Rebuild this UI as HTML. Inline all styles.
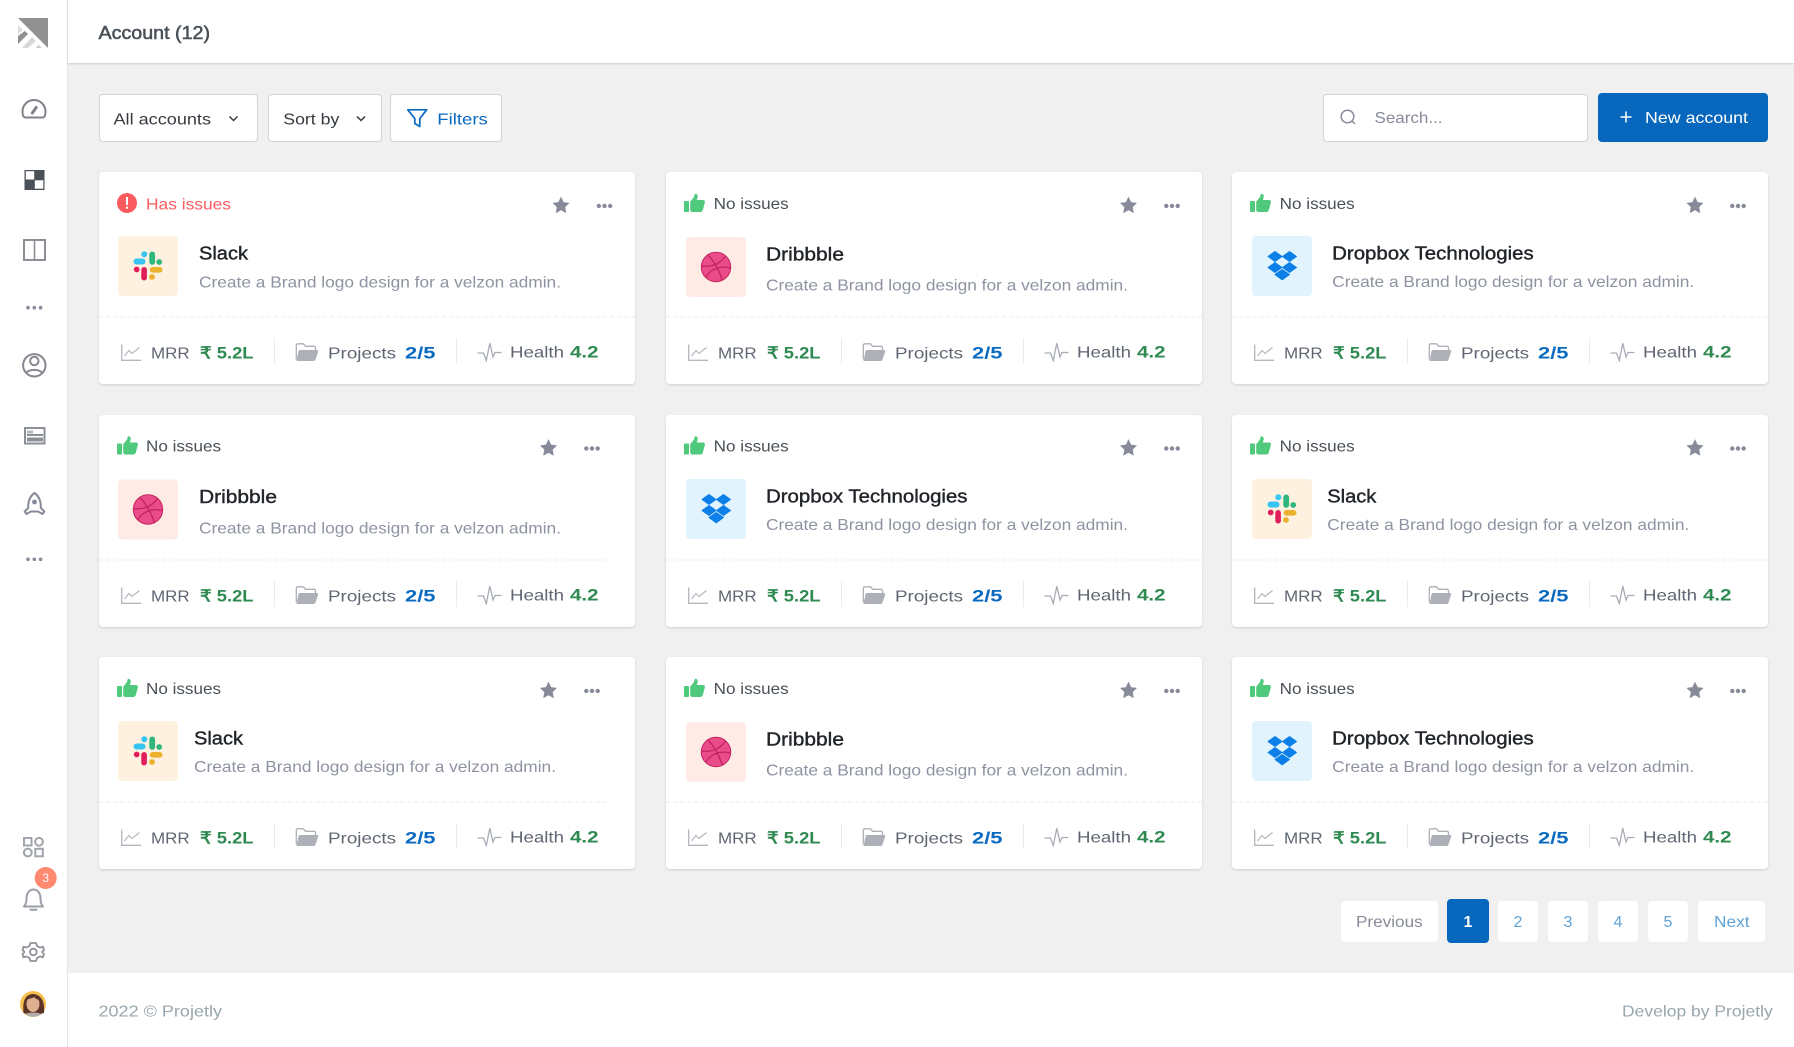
<!DOCTYPE html>
<html lang="en"><head><meta charset="utf-8"><title>Account</title>
<style>
*{box-sizing:border-box}
html,body{margin:0;width:1794px;height:1047px;overflow:hidden;background:#f0f0f0;font-family:"Liberation Sans",sans-serif}
.side{position:absolute;left:0;top:0;width:68px;height:1047px;background:#fff;border-right:1px solid #e6e6e6}
.head{position:absolute;left:68px;top:0;width:1726px;height:63px;background:#fff;box-shadow:0 1px 2px rgba(56,65,74,.2)}
.foot{position:absolute;left:68px;top:973px;width:1726px;height:74px;background:#fff}
.btn{position:absolute;background:#fff;border:1px solid #ced4da;border-radius:4px}
.pg{position:absolute;top:901px;height:41px;background:#fff;border-radius:4px}
.card{position:absolute;width:536px;height:212px;background:#fff;border-radius:4px;box-shadow:0 1px 2px rgba(56,65,74,.18)}
.card svg{position:absolute;left:0;top:0}
svg text{font-family:"Liberation Sans",sans-serif;font-size:16px;white-space:pre}
.s{fill:#495057}.r{fill:#fb5b5f}
.ti{fill:#212529;font-size:18.3px;stroke:#212529;stroke-width:.4px}
.de{fill:#8d93a1}
.l{fill:#5f6672}
.v{font-weight:700;font-size:16.5px}
.g{fill:#2f8a52}.b{fill:#0a6ac0}
</style></head><body>
<svg width="0" height="0" style="position:absolute"><defs>
<symbol id="up" viewBox="0 0 21 19"><rect x="0" y="7.5" width="5" height="11" rx="1" fill="#4fc97b"/><path d="M6.2 8.2 10 3.5 10.8.4c2.4-.5 3.4 1.4 2.8 3.4L12.800 6.500H19c1.500 0 2.200 1.300 1.800 2.600L18.800 16.500c-.4 1.200-1.300 2-2.600 2H8.500c-1.300 0-2.300-.8-2.300-2Z" fill="#4fc97b"/></symbol>
<symbol id="star" viewBox="0 0 18 18"><path d="M9 .6 11.600 6.200 17.600 7 13.200 11.200 14.300 17.300 9 14.300 3.700 17.300 4.800 11.200.4 7 6.400 6.200Z" fill="#878a99" stroke="#878a99" stroke-width=".5" stroke-linejoin="round"/></symbol>
<symbol id="more" viewBox="0 0 16 5"><circle cx="2.300" cy="2.500" r="2.200" fill="#878a99"/><circle cx="8" cy="2.500" r="2.200" fill="#878a99"/><circle cx="13.700" cy="2.500" r="2.200" fill="#878a99"/></symbol>
<symbol id="slack" viewBox="0 0 60 60"><circle cx="26.300" cy="18.300" r="3" fill="#36c5f0"/><rect x="15.500" y="22.500" width="12" height="6" rx="3" fill="#36c5f0"/><rect x="31.300" y="15.500" width="5.800" height="13.300" rx="2.900" fill="#2eb67d"/><circle cx="41.200" cy="26" r="2.900" fill="#2eb67d"/><circle cx="18.700" cy="33.500" r="2.900" fill="#e01e5a"/><rect x="23.300" y="31" width="5.600" height="13.500" rx="2.800" fill="#e01e5a"/><rect x="31.700" y="31" width="12.800" height="5.600" rx="2.800" fill="#ecb22e"/><circle cx="34" cy="41" r="2.900" fill="#ecb22e"/></symbol>
<symbol id="drop" viewBox="0 0 60 60"><g fill="#0d7fe8" stroke="#0d7fe8" stroke-width="1" stroke-linejoin="round"><path d="M23 15.500 30 20.500 23 25.500 16 20.500Z"/><path d="M37.500 15.500 44.500 20.500 37.500 25.500 30.500 20.500Z"/><path d="M23 26.500 30 31.500 23 36.500 16 31.500Z"/><path d="M37.500 26.500 44.500 31.500 37.500 36.500 30.500 31.500Z"/><path d="M30.200 33.500 37.500 38.500 30.200 43.800 23 38.500Z"/></g></symbol>
<symbol id="drib" viewBox="0 0 60 60"><circle cx="30" cy="30" r="14.700" fill="#ea4c89" stroke="#c32361" stroke-width="1"/><g fill="none" stroke="#c32361" stroke-width="1.300"><path d="M22 18C28 24 33 33 36.500 43.500"/><path d="M16 29C24 30 33 28 39.500 19"/><path d="M20 40C24 33 33 28 44.500 31"/></g></symbol>
<symbol id="ch" viewBox="0 0 20 17"><path d="M.7.5V16.300H20" fill="none" stroke="#b3b7be" stroke-width="1.300"/><path d="M3.500 12 8 6.500 11 9.500 18.500 3.500" fill="none" stroke="#b3b7be" stroke-width="1.200"/></symbol>
<symbol id="fo" viewBox="0 0 23 18"><path d="M.8 16.500V2.300A1.500 1.500 0 0 1 2.300.8H8L10 3.300H18.500A1.500 1.500 0 0 1 20 4.800V7.500" fill="none" stroke="#adb0b7" stroke-width="1.300"/><path d="M4.500 7H21.500C22.500 7 23 7.600 22.700 8.500L20 16.500C19.700 17.500 19 18 18 18H1L3 8.300C3.200 7.400 3.700 7 4.500 7Z" fill="#adb0b7"/></symbol>
<symbol id="pu" viewBox="0 0 24 20"><path d="M0 11H6L8.800 18.500 12.300 1.200 15.500 15 17.500 10.500H24" fill="none" stroke="#a8adb5" stroke-width="1.300"/></symbol>
</defs></svg>

<div class="side"></div>
<div class="head"></div>
<div class="foot"></div>
<div class="btn" style="left:98.500px;top:94px;width:159.500px;height:48px"></div>
<div class="btn" style="left:268px;top:94px;width:113.500px;height:48px"></div>
<div class="btn" style="left:389.500px;top:94px;width:112.500px;height:48px"></div>
<div class="btn" style="left:1323px;top:93.500px;width:265px;height:48.500px"></div>
<div class="btn" style="left:1598px;top:93px;width:170px;height:49px;background:#0667bd;border:0"></div>

<div class="card" style="left:98.500px;top:172px"><svg width="536" height="212">
<circle cx="28" cy="31" r="10" fill="#fb5b5f"/><rect x="27" y="25" width="2" height="8" fill="#fff"/><rect x="27" y="34.500" width="2" height="2.200" fill="#fff"/>
<text class="r" x="47" y="37.500" textLength="85" lengthAdjust="spacingAndGlyphs">Has issues</text>
<use href="#star" x="453.500" y="24.500" width="17" height="17"/><use href="#more" x="497.500" y="31.500" width="16" height="5"/>
<rect x="19" y="64" width="60" height="60" rx="4" fill="#fff1e0"/><use href="#slack" x="19" y="64" width="60" height="60"/>
<text class="ti" x="100" y="87.500" textLength="49" lengthAdjust="spacingAndGlyphs">Slack</text>
<text class="de" x="100" y="115.500" textLength="362" lengthAdjust="spacingAndGlyphs">Create a Brand logo design for a velzon admin.</text>
<line x1="0" x2="536" y1="145" y2="145" stroke="#e9ebec" stroke-dasharray="4 3"/>
<use href="#ch" x="22" y="172" width="20" height="17"/><text class="l" x="52" y="186.500" textLength="38.700" lengthAdjust="spacingAndGlyphs">MRR</text><text class="v g" x="101" y="186.500" textLength="53.500" lengthAdjust="spacingAndGlyphs">₹ 5.2L</text><rect x="175" y="166" width="1" height="26" fill="#e9ebec"/><use href="#fo" x="196.500" y="171" width="23" height="18"/><text class="l" x="229" y="186.500" textLength="68" lengthAdjust="spacingAndGlyphs">Projects</text><text class="v b" x="306" y="186.500" textLength="30.500" lengthAdjust="spacingAndGlyphs">2/5</text><rect x="357" y="166" width="1" height="26" fill="#e9ebec"/><use href="#pu" x="378.500" y="170" width="24" height="20"/><text class="l" x="411" y="185.500" textLength="54" lengthAdjust="spacingAndGlyphs">Health</text><text class="v g" x="471" y="185.500" textLength="28.500" lengthAdjust="spacingAndGlyphs">4.2</text>
</svg></div>

<div class="card" style="left:666px;top:172px"><svg width="536" height="212">
<use href="#up" x="18" y="21.500" width="21" height="19"/>
<text class="s" x="47.700" y="37" textLength="75" lengthAdjust="spacingAndGlyphs">No issues</text>
<use href="#star" x="454" y="24.500" width="17" height="17"/><use href="#more" x="498" y="31.500" width="16" height="5"/>
<rect x="20" y="65" width="60" height="60" rx="4" fill="#ffebe6"/><use href="#drib" x="20" y="65" width="60" height="60"/>
<text class="ti" x="100" y="88.500" textLength="78" lengthAdjust="spacingAndGlyphs">Dribbble</text>
<text class="de" x="100" y="118.500" textLength="362" lengthAdjust="spacingAndGlyphs">Create a Brand logo design for a velzon admin.</text>
<line x1="0" x2="536" y1="145" y2="145" stroke="#e9ebec" stroke-dasharray="4 3"/>
<use href="#ch" x="22" y="172" width="20" height="17"/><text class="l" x="52" y="186.500" textLength="38.700" lengthAdjust="spacingAndGlyphs">MRR</text><text class="v g" x="101" y="186.500" textLength="53.500" lengthAdjust="spacingAndGlyphs">₹ 5.2L</text><rect x="175" y="166" width="1" height="26" fill="#e9ebec"/><use href="#fo" x="196.500" y="171" width="23" height="18"/><text class="l" x="229" y="186.500" textLength="68" lengthAdjust="spacingAndGlyphs">Projects</text><text class="v b" x="306" y="186.500" textLength="30.500" lengthAdjust="spacingAndGlyphs">2/5</text><rect x="357" y="166" width="1" height="26" fill="#e9ebec"/><use href="#pu" x="378.500" y="170" width="24" height="20"/><text class="l" x="411" y="185.500" textLength="54" lengthAdjust="spacingAndGlyphs">Health</text><text class="v g" x="471" y="185.500" textLength="28.500" lengthAdjust="spacingAndGlyphs">4.2</text>
</svg></div>

<div class="card" style="left:1232px;top:172px"><svg width="536" height="212">
<use href="#up" x="18" y="21.500" width="21" height="19"/>
<text class="s" x="47.700" y="37" textLength="75" lengthAdjust="spacingAndGlyphs">No issues</text>
<use href="#star" x="454.500" y="24.500" width="17" height="17"/><use href="#more" x="498" y="31.500" width="16" height="5"/>
<rect x="20" y="64" width="60" height="60" rx="4" fill="#e1f4fd"/><use href="#drop" x="20" y="64" width="60" height="60"/>
<text class="ti" x="100.200" y="87.500" textLength="201.500" lengthAdjust="spacingAndGlyphs">Dropbox Technologies</text>
<text class="de" x="100.200" y="115.200" textLength="362" lengthAdjust="spacingAndGlyphs">Create a Brand logo design for a velzon admin.</text>
<line x1="0" x2="536" y1="145" y2="145" stroke="#e9ebec" stroke-dasharray="4 3"/>
<use href="#ch" x="22" y="172" width="20" height="17"/><text class="l" x="52" y="186.500" textLength="38.700" lengthAdjust="spacingAndGlyphs">MRR</text><text class="v g" x="101" y="186.500" textLength="53.500" lengthAdjust="spacingAndGlyphs">₹ 5.2L</text><rect x="175" y="166" width="1" height="26" fill="#e9ebec"/><use href="#fo" x="196.500" y="171" width="23" height="18"/><text class="l" x="229" y="186.500" textLength="68" lengthAdjust="spacingAndGlyphs">Projects</text><text class="v b" x="306" y="186.500" textLength="30.500" lengthAdjust="spacingAndGlyphs">2/5</text><rect x="357" y="166" width="1" height="26" fill="#e9ebec"/><use href="#pu" x="378.500" y="170" width="24" height="20"/><text class="l" x="411" y="185.500" textLength="54" lengthAdjust="spacingAndGlyphs">Health</text><text class="v g" x="471" y="185.500" textLength="28.500" lengthAdjust="spacingAndGlyphs">4.2</text>
</svg></div>

<div class="card" style="left:98.500px;top:414.500px"><svg width="536" height="212">
<use href="#up" x="18" y="21" width="21" height="19"/>
<text class="s" x="47" y="36.500" textLength="75" lengthAdjust="spacingAndGlyphs">No issues</text>
<use href="#star" x="441" y="24" width="17" height="17"/><use href="#more" x="485" y="31" width="16" height="5"/>
<rect x="19" y="64.500" width="60" height="60" rx="4" fill="#ffebe6"/><use href="#drib" x="19" y="64.500" width="60" height="60"/>
<text class="ti" x="100" y="88" textLength="78" lengthAdjust="spacingAndGlyphs">Dribbble</text>
<text class="de" x="100" y="118.300" textLength="362" lengthAdjust="spacingAndGlyphs">Create a Brand logo design for a velzon admin.</text>
<line x1="0" x2="512" y1="145" y2="145" stroke="#e9ebec" stroke-dasharray="4 3"/>
<use href="#ch" x="22" y="172" width="20" height="17"/><text class="l" x="52" y="186.500" textLength="38.700" lengthAdjust="spacingAndGlyphs">MRR</text><text class="v g" x="101" y="186.500" textLength="53.500" lengthAdjust="spacingAndGlyphs">₹ 5.2L</text><rect x="175" y="166" width="1" height="26" fill="#e9ebec"/><use href="#fo" x="196.500" y="171" width="23" height="18"/><text class="l" x="229" y="186.500" textLength="68" lengthAdjust="spacingAndGlyphs">Projects</text><text class="v b" x="306" y="186.500" textLength="30.500" lengthAdjust="spacingAndGlyphs">2/5</text><rect x="357" y="166" width="1" height="26" fill="#e9ebec"/><use href="#pu" x="378.500" y="170" width="24" height="20"/><text class="l" x="411" y="185.500" textLength="54" lengthAdjust="spacingAndGlyphs">Health</text><text class="v g" x="471" y="185.500" textLength="28.500" lengthAdjust="spacingAndGlyphs">4.2</text>
</svg></div>

<div class="card" style="left:666px;top:414.500px"><svg width="536" height="212">
<use href="#up" x="18" y="21" width="21" height="19"/>
<text class="s" x="47.700" y="36.500" textLength="75" lengthAdjust="spacingAndGlyphs">No issues</text>
<use href="#star" x="454" y="24" width="17" height="17"/><use href="#more" x="498" y="31" width="16" height="5"/>
<rect x="20" y="64" width="60" height="60" rx="4" fill="#e1f4fd"/><use href="#drop" x="20" y="64" width="60" height="60"/>
<text class="ti" x="100" y="87.500" textLength="201.500" lengthAdjust="spacingAndGlyphs">Dropbox Technologies</text>
<text class="de" x="100" y="115.200" textLength="362" lengthAdjust="spacingAndGlyphs">Create a Brand logo design for a velzon admin.</text>
<line x1="0" x2="536" y1="145" y2="145" stroke="#e9ebec" stroke-dasharray="4 3"/>
<use href="#ch" x="22" y="172" width="20" height="17"/><text class="l" x="52" y="186.500" textLength="38.700" lengthAdjust="spacingAndGlyphs">MRR</text><text class="v g" x="101" y="186.500" textLength="53.500" lengthAdjust="spacingAndGlyphs">₹ 5.2L</text><rect x="175" y="166" width="1" height="26" fill="#e9ebec"/><use href="#fo" x="196.500" y="171" width="23" height="18"/><text class="l" x="229" y="186.500" textLength="68" lengthAdjust="spacingAndGlyphs">Projects</text><text class="v b" x="306" y="186.500" textLength="30.500" lengthAdjust="spacingAndGlyphs">2/5</text><rect x="357" y="166" width="1" height="26" fill="#e9ebec"/><use href="#pu" x="378.500" y="170" width="24" height="20"/><text class="l" x="411" y="185.500" textLength="54" lengthAdjust="spacingAndGlyphs">Health</text><text class="v g" x="471" y="185.500" textLength="28.500" lengthAdjust="spacingAndGlyphs">4.2</text>
</svg></div>

<div class="card" style="left:1232px;top:414.500px"><svg width="536" height="212">
<use href="#up" x="18" y="21" width="21" height="19"/>
<text class="s" x="47.700" y="36.500" textLength="75" lengthAdjust="spacingAndGlyphs">No issues</text>
<use href="#star" x="454.500" y="24" width="17" height="17"/><use href="#more" x="498" y="31" width="16" height="5"/>
<rect x="20" y="64" width="60" height="60" rx="4" fill="#fff1e0"/><use href="#slack" x="20" y="64" width="60" height="60"/>
<text class="ti" x="95.300" y="87.500" textLength="49" lengthAdjust="spacingAndGlyphs">Slack</text>
<text class="de" x="95.300" y="115.200" textLength="362" lengthAdjust="spacingAndGlyphs">Create a Brand logo design for a velzon admin.</text>
<line x1="0" x2="536" y1="145" y2="145" stroke="#e9ebec" stroke-dasharray="4 3"/>
<use href="#ch" x="22" y="172" width="20" height="17"/><text class="l" x="52" y="186.500" textLength="38.700" lengthAdjust="spacingAndGlyphs">MRR</text><text class="v g" x="101" y="186.500" textLength="53.500" lengthAdjust="spacingAndGlyphs">₹ 5.2L</text><rect x="175" y="166" width="1" height="26" fill="#e9ebec"/><use href="#fo" x="196.500" y="171" width="23" height="18"/><text class="l" x="229" y="186.500" textLength="68" lengthAdjust="spacingAndGlyphs">Projects</text><text class="v b" x="306" y="186.500" textLength="30.500" lengthAdjust="spacingAndGlyphs">2/5</text><rect x="357" y="166" width="1" height="26" fill="#e9ebec"/><use href="#pu" x="378.500" y="170" width="24" height="20"/><text class="l" x="411" y="185.500" textLength="54" lengthAdjust="spacingAndGlyphs">Health</text><text class="v g" x="471" y="185.500" textLength="28.500" lengthAdjust="spacingAndGlyphs">4.2</text>
</svg></div>

<div class="card" style="left:98.500px;top:657px"><svg width="536" height="212">
<use href="#up" x="18" y="21.500" width="21" height="19"/>
<text class="s" x="47" y="37" textLength="75" lengthAdjust="spacingAndGlyphs">No issues</text>
<use href="#star" x="441" y="24.500" width="17" height="17"/><use href="#more" x="485" y="31.500" width="16" height="5"/>
<rect x="19" y="64" width="60" height="60" rx="4" fill="#fff1e0"/><use href="#slack" x="19" y="64" width="60" height="60"/>
<text class="ti" x="95" y="87.500" textLength="49" lengthAdjust="spacingAndGlyphs">Slack</text>
<text class="de" x="95" y="115.200" textLength="362" lengthAdjust="spacingAndGlyphs">Create a Brand logo design for a velzon admin.</text>
<line x1="0" x2="512" y1="145" y2="145" stroke="#e9ebec" stroke-dasharray="4 3"/>
<use href="#ch" x="22" y="172" width="20" height="17"/><text class="l" x="52" y="186.500" textLength="38.700" lengthAdjust="spacingAndGlyphs">MRR</text><text class="v g" x="101" y="186.500" textLength="53.500" lengthAdjust="spacingAndGlyphs">₹ 5.2L</text><rect x="175" y="166" width="1" height="26" fill="#e9ebec"/><use href="#fo" x="196.500" y="171" width="23" height="18"/><text class="l" x="229" y="186.500" textLength="68" lengthAdjust="spacingAndGlyphs">Projects</text><text class="v b" x="306" y="186.500" textLength="30.500" lengthAdjust="spacingAndGlyphs">2/5</text><rect x="357" y="166" width="1" height="26" fill="#e9ebec"/><use href="#pu" x="378.500" y="170" width="24" height="20"/><text class="l" x="411" y="185.500" textLength="54" lengthAdjust="spacingAndGlyphs">Health</text><text class="v g" x="471" y="185.500" textLength="28.500" lengthAdjust="spacingAndGlyphs">4.2</text>
</svg></div>

<div class="card" style="left:666px;top:657px"><svg width="536" height="212">
<use href="#up" x="18" y="21.500" width="21" height="19"/>
<text class="s" x="47.700" y="37" textLength="75" lengthAdjust="spacingAndGlyphs">No issues</text>
<use href="#star" x="454" y="24.500" width="17" height="17"/><use href="#more" x="498" y="31.500" width="16" height="5"/>
<rect x="20" y="65" width="60" height="60" rx="4" fill="#ffebe6"/><use href="#drib" x="20" y="65" width="60" height="60"/>
<text class="ti" x="100" y="88.500" textLength="78" lengthAdjust="spacingAndGlyphs">Dribbble</text>
<text class="de" x="100" y="118.500" textLength="362" lengthAdjust="spacingAndGlyphs">Create a Brand logo design for a velzon admin.</text>
<line x1="0" x2="536" y1="145" y2="145" stroke="#e9ebec" stroke-dasharray="4 3"/>
<use href="#ch" x="22" y="172" width="20" height="17"/><text class="l" x="52" y="186.500" textLength="38.700" lengthAdjust="spacingAndGlyphs">MRR</text><text class="v g" x="101" y="186.500" textLength="53.500" lengthAdjust="spacingAndGlyphs">₹ 5.2L</text><rect x="175" y="166" width="1" height="26" fill="#e9ebec"/><use href="#fo" x="196.500" y="171" width="23" height="18"/><text class="l" x="229" y="186.500" textLength="68" lengthAdjust="spacingAndGlyphs">Projects</text><text class="v b" x="306" y="186.500" textLength="30.500" lengthAdjust="spacingAndGlyphs">2/5</text><rect x="357" y="166" width="1" height="26" fill="#e9ebec"/><use href="#pu" x="378.500" y="170" width="24" height="20"/><text class="l" x="411" y="185.500" textLength="54" lengthAdjust="spacingAndGlyphs">Health</text><text class="v g" x="471" y="185.500" textLength="28.500" lengthAdjust="spacingAndGlyphs">4.2</text>
</svg></div>

<div class="card" style="left:1232px;top:657px"><svg width="536" height="212">
<use href="#up" x="18" y="21.500" width="21" height="19"/>
<text class="s" x="47.700" y="37" textLength="75" lengthAdjust="spacingAndGlyphs">No issues</text>
<use href="#star" x="454.500" y="24.500" width="17" height="17"/><use href="#more" x="498" y="31.500" width="16" height="5"/>
<rect x="20" y="64" width="60" height="60" rx="4" fill="#e1f4fd"/><use href="#drop" x="20" y="64" width="60" height="60"/>
<text class="ti" x="100.200" y="87.500" textLength="201.500" lengthAdjust="spacingAndGlyphs">Dropbox Technologies</text>
<text class="de" x="100.200" y="115.200" textLength="362" lengthAdjust="spacingAndGlyphs">Create a Brand logo design for a velzon admin.</text>
<line x1="0" x2="536" y1="145" y2="145" stroke="#e9ebec" stroke-dasharray="4 3"/>
<use href="#ch" x="22" y="172" width="20" height="17"/><text class="l" x="52" y="186.500" textLength="38.700" lengthAdjust="spacingAndGlyphs">MRR</text><text class="v g" x="101" y="186.500" textLength="53.500" lengthAdjust="spacingAndGlyphs">₹ 5.2L</text><rect x="175" y="166" width="1" height="26" fill="#e9ebec"/><use href="#fo" x="196.500" y="171" width="23" height="18"/><text class="l" x="229" y="186.500" textLength="68" lengthAdjust="spacingAndGlyphs">Projects</text><text class="v b" x="306" y="186.500" textLength="30.500" lengthAdjust="spacingAndGlyphs">2/5</text><rect x="357" y="166" width="1" height="26" fill="#e9ebec"/><use href="#pu" x="378.500" y="170" width="24" height="20"/><text class="l" x="411" y="185.500" textLength="54" lengthAdjust="spacingAndGlyphs">Health</text><text class="v g" x="471" y="185.500" textLength="28.500" lengthAdjust="spacingAndGlyphs">4.2</text>
</svg></div>

<div class="pg" style="left:1340.500px;width:97.500px"></div>
<div class="pg" style="left:1447px;top:899px;width:42px;height:44px;background:#0667bd"></div>
<div class="pg" style="left:1498px;width:40px"></div>
<div class="pg" style="left:1548px;width:40px"></div>
<div class="pg" style="left:1598px;width:40px"></div>
<div class="pg" style="left:1648px;width:40px"></div>
<div class="pg" style="left:1698px;width:67px"></div>

<svg width="1794" height="1047" style="position:absolute;left:0;top:0">
<!-- logo -->
<path d="M18 18H48V48Z" fill="#919191"/>
<path d="M18 25 23 30 18 34Z" fill="#dcdcdc"/>
<path d="M18 44V36L25 31 28 34Z" fill="#8f8f8f"/>
<path d="M22 48 32 37 36 41 28 48Z" fill="#d8d8d8"/>
<path d="M36 48 38.500 45 42 48Z" fill="#c8c8d0"/>
<!-- gauge -->
<path d="M26 117.500H42.500C44.500 117.500 45.500 116 45.500 111.500A11.500 11.500 0 1 0 22.500 111.500C22.500 116 23.500 117.500 26 117.500Z" fill="none" stroke="#7f8289" stroke-width="2"/>
<path d="M32.300 113 36.200 107.500" stroke="#7f8289" stroke-width="3" stroke-linecap="round"/>
<!-- checker -->
<rect x="24.500" y="170" width="20" height="20" fill="#495057"/><rect x="25.800" y="171.200" width="8.400" height="8.300" fill="#fff"/><rect x="34.800" y="180.300" width="8.500" height="8.400" fill="#fff"/>
<!-- columns -->
<rect x="24" y="240" width="21" height="20" fill="none" stroke="#8a8f96" stroke-width="2"/><rect x="33.700" y="240" width="1.600" height="20" fill="#8a8f96"/>
<!-- dots -->
<g fill="#878a99"><circle cx="28" cy="307.700" r="1.800"/><circle cx="34.300" cy="307.700" r="1.800"/><circle cx="40.600" cy="307.700" r="1.800"/><circle cx="28" cy="559.300" r="1.800"/><circle cx="34.300" cy="559.300" r="1.800"/><circle cx="40.600" cy="559.300" r="1.800"/></g>
<!-- user -->
<circle cx="34.300" cy="365.300" r="11.200" fill="none" stroke="#85888f" stroke-width="2"/><circle cx="34.300" cy="361" r="4.200" fill="none" stroke="#85888f" stroke-width="2"/><path d="M26.500 373C28 368.800 40.500 368.800 42 373" fill="none" stroke="#85888f" stroke-width="2"/>
<!-- news -->
<rect x="25" y="428" width="19.500" height="15.500" fill="#fff" stroke="#8b8f96" stroke-width="2"/><rect x="27" y="430.500" width="6" height="3" fill="#b5b8be"/><rect x="27" y="434" width="16" height="2" fill="#8b8f96"/><rect x="27" y="437.500" width="16" height="4" fill="#8b8f96"/>
<!-- rocket -->
<path d="M34.500 493C39.500 496.500 41 502 40.800 508L44.300 511.500 42.500 514 38 511.500H31L26.500 514 24.700 511.500 28.200 508C28 502 29.500 496.500 34.500 493Z" fill="none" stroke="#878a99" stroke-width="2" stroke-linejoin="round"/><circle cx="34.500" cy="502" r="2.400" fill="#878a99"/>
<!-- grid -->
<g fill="none" stroke="#a0a4ab" stroke-width="2"><rect x="24" y="838" width="7.500" height="7.500"/><circle cx="39" cy="841.800" r="3.900"/><circle cx="27.800" cy="852.500" r="3.900"/><rect x="35.300" y="848.800" width="7.500" height="7.500"/></g>
<!-- bell -->
<path d="M24 906.500C26 904.500 26.500 902 26.500 898.500C26.500 893 29.500 889.500 33.500 889.500C37.500 889.500 40.500 893 40.500 898.500C40.500 902 41 904.500 43 906.500Z" fill="none" stroke="#9a9ea6" stroke-width="2" stroke-linejoin="round"/><path d="M30.500 909.800H36.500" stroke="#9a9ea6" stroke-width="2" stroke-linecap="round"/>
<circle cx="45.700" cy="878" r="11" fill="#ff8a70"/>
<text x="45.700" y="882" text-anchor="middle" style="font-size:12px;fill:#fff">3</text>
<!-- gear -->
<path d="M30.500 943H36L37 946 40 947.500 43 946.800 44 950 42 952 44 954 43 957.200 40 956.500 37 958 36 961H30.500L29.500 958 26.500 956.500 23.500 957.200 22.500 954 24.500 952 22.500 950 23.500 946.800 26.500 947.500 29.500 946Z" fill="none" stroke="#8e9198" stroke-width="1.800" stroke-linejoin="round"/><circle cx="33.300" cy="952" r="3.300" fill="none" stroke="#8e9198" stroke-width="1.800"/>
<!-- avatar -->
<circle cx="33" cy="1004" r="13" fill="#f8c14f"/>
<path d="M23.500 1013C22.500 1003 24 994.500 33 994C42 994.500 45 1003 44 1013L33 1016Z" fill="#5b3427"/>
<ellipse cx="33" cy="1004" rx="6.500" ry="8" fill="#e0ae90"/>
<path d="M27 1000C29 998 32 999 34 997C35.500 999 38 999 39.500 1001L39.500 997 33 995 26.500 997Z" fill="#5b3427"/>
<path d="M25.500 1014C28 1012 38 1012 41.500 1014A13 13 0 0 1 25.500 1014Z" fill="#b0aaa8"/>
<!-- header & toolbar text -->
<text class="ti" x="98.500" y="39" textLength="111.500" lengthAdjust="spacingAndGlyphs" style="fill:#495057;stroke:#495057;stroke-width:.55px">Account (12)</text>
<text x="113.500" y="124.500" textLength="97.500" lengthAdjust="spacingAndGlyphs" fill="#343a40">All accounts</text>
<path d="M229.500 116.500 233.500 120.500 237.500 116.500" fill="none" stroke="#343a40" stroke-width="1.500"/>
<text x="283.300" y="124.500" textLength="56" lengthAdjust="spacingAndGlyphs" fill="#343a40">Sort by</text>
<path d="M357 116.500 361 120.500 365 116.500" fill="none" stroke="#343a40" stroke-width="1.500"/>
<path d="M407.800 109.800H426.700L419.800 118.500V126.500L414.800 123.500V118.500Z" fill="none" stroke="#0a6ac0" stroke-width="1.700" stroke-linejoin="round"/>
<text x="437.300" y="124.500" textLength="50.500" lengthAdjust="spacingAndGlyphs" fill="#0a6ac0">Filters</text>
<circle cx="1347.500" cy="116.500" r="6.300" fill="none" stroke="#878a99" stroke-width="1.500"/><path d="M1352 121 1355 124" stroke="#878a99" stroke-width="1.500"/>
<text x="1374.500" y="123" textLength="68" lengthAdjust="spacingAndGlyphs" fill="#878a99">Search...</text>
<path d="M1626 111.500V122.500M1620.500 117H1631.500" stroke="#fff" stroke-width="1.500"/>
<text x="1645" y="123" textLength="103" lengthAdjust="spacingAndGlyphs" fill="#fff">New account</text>
<!-- pagination -->
<text x="1356" y="927" textLength="66.700" lengthAdjust="spacingAndGlyphs" fill="#878a99">Previous</text>
<text x="1468" y="927" text-anchor="middle" fill="#fff" font-weight="700">1</text>
<text x="1518" y="927" text-anchor="middle" fill="#5ea3d8">2</text>
<text x="1568" y="927" text-anchor="middle" fill="#5ea3d8">3</text>
<text x="1618" y="927" text-anchor="middle" fill="#5ea3d8">4</text>
<text x="1668" y="927" text-anchor="middle" fill="#5ea3d8">5</text>
<text x="1714" y="927" textLength="35.500" lengthAdjust="spacingAndGlyphs" fill="#5ea3d8">Next</text>
<!-- footer -->
<text x="98.500" y="1016.500" textLength="123.500" lengthAdjust="spacingAndGlyphs" fill="#98a6ad">2022 © Projetly</text>
<text x="1622" y="1016.500" textLength="150.700" lengthAdjust="spacingAndGlyphs" fill="#98a6ad">Develop by Projetly</text>
</svg>
</body></html>
